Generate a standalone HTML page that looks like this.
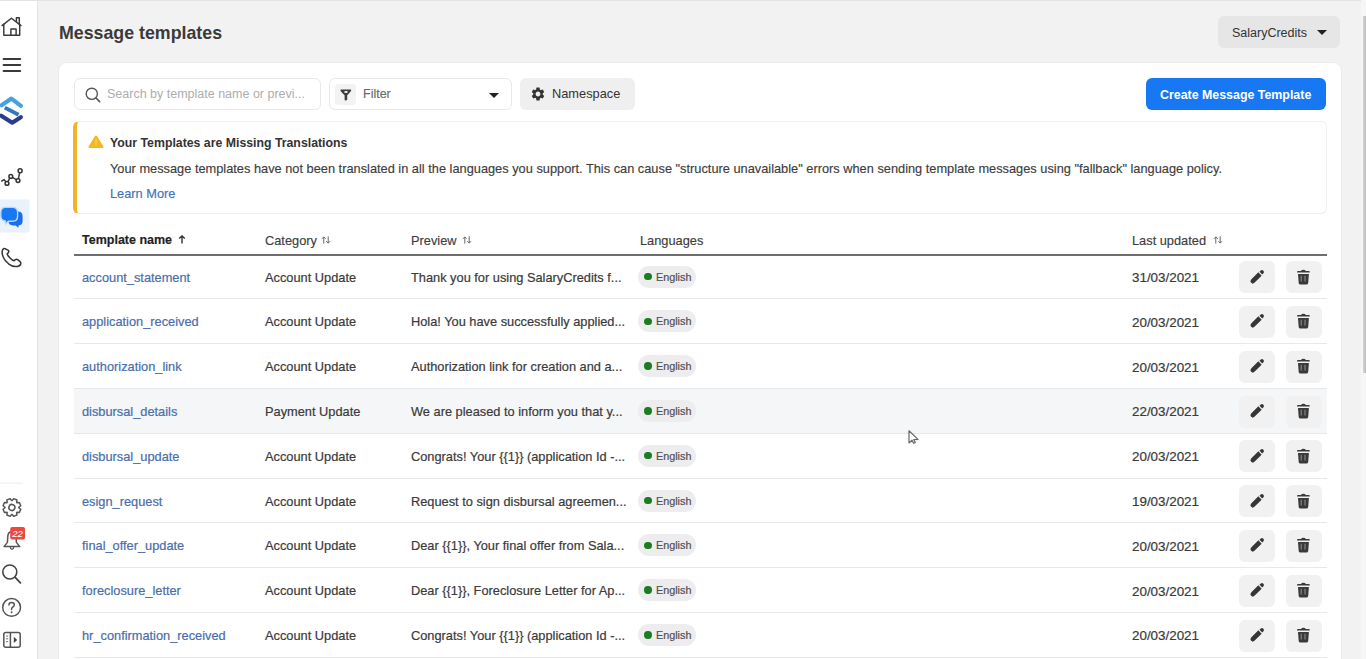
<!DOCTYPE html>
<html><head><meta charset="utf-8">
<style>
*{box-sizing:border-box;margin:0;padding:0}
html,body{width:1366px;height:659px;overflow:hidden;background:#f2f2f2;font-family:"Liberation Sans",sans-serif;color:#333}
#topline{position:absolute;left:0;top:0;width:1366px;height:1px;background:#e2e2e2}
#side{position:absolute;left:0;top:0;width:38px;height:659px;background:#fff;border-right:1px solid #e3e3e3}
#side svg{position:absolute}
#title{position:absolute;left:59px;top:23px;font-size:17.8px;font-weight:bold;color:#3a3a3a;white-space:nowrap;line-height:20px}
#acct{position:absolute;left:1218px;top:16px;width:122px;height:32px;background:#e6e6e6;border-radius:6px}
#acct span{position:absolute;left:14px;top:10px;font-size:12.5px;color:#333;line-height:15px}
.caret{position:absolute;width:0;height:0;border-left:5px solid transparent;border-right:5px solid transparent;border-top:5px solid #222}
#card{position:absolute;left:59px;top:63px;width:1282px;height:620px;background:#fff;border-radius:8px;box-shadow:0 0 0 1px #ebebeb}
#scroll{position:absolute;left:1361px;top:0;width:5px;height:659px;background:#f6f6f6}
#thumb{position:absolute;left:1363px;top:16px;width:3px;height:357px;background:linear-gradient(90deg,#d4d4d4,#bdbdbd)}
#search{position:absolute;left:74px;top:78px;width:247px;height:32px;border:1px solid #e8e8e8;border-radius:6px;background:#fff}
#search span{position:absolute;left:32px;top:8.3px;font-size:12.5px;color:#adadad;line-height:15px;white-space:nowrap}
#filter{position:absolute;left:329px;top:78px;width:183px;height:32px;border:1px solid #e8e8e8;border-radius:6px;background:#fff}
#filter .ic{position:absolute;left:5px;top:5px;width:21px;height:21px;background:#f3f3f3;border-radius:4px}
#filter span{position:absolute;left:33px;top:8px;font-size:12.5px;color:#6a6a6a;-webkit-text-stroke:0.15px currentColor;line-height:15px}
#ns{position:absolute;left:520px;top:78px;width:115px;height:32px;background:#efefef;border-radius:6px}
#ns span{position:absolute;left:32px;top:8px;font-size:12.8px;color:#333;line-height:15px}
#create{position:absolute;left:1146px;top:78px;width:180px;height:32px;background:#1877f2;border-radius:6px}
#create span{position:absolute;left:14px;top:9.5px;font-size:12.4px;font-weight:bold;color:#fff;line-height:15px;white-space:nowrap}
#alert{position:absolute;left:73px;top:121px;width:1254px;height:93px;border:1px solid #efefef;border-left:4px solid #f0b429;border-radius:6px;background:#fff}
#alert .t{position:absolute;left:33px;top:14px;font-size:12.3px;font-weight:bold;color:#333;line-height:15px;white-space:nowrap}
#alert .b{position:absolute;left:33px;top:38.5px;font-size:12.8px;color:#3d3d3d;-webkit-text-stroke:0.15px currentColor;line-height:15px;white-space:nowrap}
#alert .l{position:absolute;left:33px;top:64.3px;font-size:12.8px;color:#4172b8;-webkit-text-stroke:0.15px currentColor;line-height:15px;white-space:nowrap}
#alert svg{position:absolute;left:11px;top:13px}
#thead{position:absolute;left:74px;top:225px;width:1253px;height:31px;border-bottom:2px solid #6e6e6e}
#thead span{position:absolute;top:8px;-webkit-text-stroke:0.15px currentColor;font-size:12.8px;color:#3d3d3d;line-height:15px;white-space:nowrap}
#thead svg{position:absolute}
.row{position:absolute;left:74px;width:1253px;height:44.8px;border-bottom:1px solid #e8e8e8}
.row.hov{background:#f5f6f7}
.row span{position:absolute;top:15px;-webkit-text-stroke:0.2px currentColor;font-size:12.8px;line-height:15px;white-space:nowrap;color:#3a3a3a}
.row .nm{left:8px;color:#4a6eaa}
.row .ct{left:191px}
.row .pv{left:337px}
.row .dt{left:1058px;font-size:13.4px!important;top:15.4px!important}
.pill{position:absolute;left:564px;top:11px;width:58px;height:22px;border-radius:11px;background:#ededef}
.pill i{position:absolute;left:6.2px;top:7.3px;width:7.4px;height:7.4px;border-radius:50%;background:#1a7d22}
.pill span{left:18px!important;top:4px!important;font-size:10.8px!important;color:#505050!important}
.btn{position:absolute;top:6.5px;width:36px;height:32px;border-radius:6px;background:#f1f1f1}
.b1{left:1165px}.b2{left:1212px}
.btn svg{position:absolute;left:10px;top:7.5px}
.b2 svg{left:11px}
#cursor{position:absolute;left:906px;top:428px}
</style></head><body>
<div id="side"><svg style="position:absolute;left:0;top:0" width="37" height="659" viewBox="0 0 37 659">
<g fill="none" stroke="#3a3a3a" stroke-width="1.45" stroke-linejoin="round" stroke-linecap="round">
<path d="M2 25.6 L11.4 18.2 L21 25.6"/>
<path d="M3.8 24.2 V35.3 H19.7 V24.2"/>
<path d="M10.9 35.3 V28.9 H16.1 V35.3"/>
<path d="M16.4 21.6 V17.7 H19.3 V24"/>
<path d="M3.6 58.9 H20.2 M3.6 65 H20.2 M3.6 71.1 H20.2" stroke-width="2"/>
<path d="M1.8 181 L4.2 179.6 L7 183.4 L10.7 176.4 L18 180.6 L20 170.8" stroke-width="1.5"/>
</g>
<g fill="#fff" stroke="#333" stroke-width="1.5">
<circle cx="7" cy="183.4" r="1.9"/><circle cx="10.8" cy="176.4" r="1.9"/><circle cx="18" cy="180.6" r="1.9"/><circle cx="20.1" cy="170.7" r="2"/>
</g>
<!-- logo -->
<path d="M1.6 105.2 L11.4 98.6 L20.9 105.8" fill="none" stroke="#45a2dd" stroke-width="4.2" stroke-linecap="round" stroke-linejoin="round"/>
<path d="M4.8 107.6 L18.6 114.8" fill="none" stroke="#2c7bc0" stroke-width="3.8"/>
<path d="M1.2 115.8 L12.2 122.7 L20.8 117.2" fill="none" stroke="#2b3c8e" stroke-width="4.2" stroke-linecap="round" stroke-linejoin="round"/>
<!-- chat active -->
<rect x="0" y="199.5" width="29.5" height="33" fill="#e9f1fb"/>
<path d="M8.5 216 Q8.5 211.6 13 211.6 L18 211.6 Q22.6 211.6 22.6 216.4 L22.6 220.8 Q22.6 225.4 18.6 225.4 L18.4 227.8 L15.6 225.4 L13 225.4 Q8.5 225.4 8.5 221 Z" fill="#1a6fe8"/>
<path d="M0.8 212.6 Q0.8 207.4 5.6 207.4 L12.6 207.4 Q17.6 207.4 17.6 212.6 L17.6 216 Q17.6 221.2 12.6 221.2 L8.4 221.2 L5.6 223.8 L5.2 221 Q0.8 220.4 0.8 216 Z" fill="#1877f2" stroke="#b9d6fa" stroke-width="1.4"/>
<!-- phone -->
<path d="M5 248.6 Q3.8 248.2 3 249.2 Q1.6 251 2.4 254.6 Q3.6 259.6 8.6 263.8 Q13.2 267.4 17.4 266.4 Q20.6 265.6 20.8 263.6 Q21 262.4 19.8 261.4 L17.6 259.6 Q16.4 258.8 15.4 259.6 L14 260.8 Q12.4 260.4 10 258 Q7.6 255.6 7.2 254 L8.4 252.6 Q9.2 251.6 8.4 250.4 Z" fill="none" stroke="#333" stroke-width="1.5" stroke-linejoin="round"/>
<!-- divider -->
<rect x="0" y="482.6" width="23" height="1" fill="#ececec"/>
<!-- gear -->
<g transform="translate(11.9 507.5) rotate(22.5)" fill="none" stroke="#555" stroke-width="1.5" stroke-linejoin="round">
<path d="M6.46 -2.43 L8.82 -1.79 L8.82 1.79 L6.46 2.43 L6.29 2.85 L7.50 4.97 L4.97 7.50 L2.85 6.29 L2.43 6.46 L1.79 8.82 L-1.79 8.82 L-2.43 6.46 L-2.85 6.29 L-4.97 7.50 L-7.50 4.97 L-6.29 2.85 L-6.46 2.43 L-8.82 1.79 L-8.82 -1.79 L-6.46 -2.43 L-6.29 -2.85 L-7.50 -4.97 L-4.97 -7.50 L-2.85 -6.29 L-2.43 -6.46 L-1.79 -8.82 L1.79 -8.82 L2.43 -6.46 L2.85 -6.29 L4.97 -7.50 L7.50 -4.97 L6.29 -2.85 Z"/>
<circle cx="0" cy="0" r="3"/>
</g>
<!-- bell -->
<path d="M7.8 536.5 Q8 531.6 12 531.4 Q15.8 531.6 16 536.5 L16.4 542.4 L19.8 546.6 L4 546.6 L7.4 542.4 Z" fill="none" stroke="#555" stroke-width="1.5" stroke-linejoin="round"/>
<path d="M10.2 547.2 Q10.6 549.4 12 549.4 Q13.4 549.4 13.8 547.2" fill="none" stroke="#555" stroke-width="1.4"/>
<rect x="10.2" y="527" width="14.8" height="12.4" rx="2" fill="#e94a3f"/>
<text x="17.6" y="536.6" font-family="Liberation Sans" font-size="9.5" font-style="italic" fill="#fff" text-anchor="middle">22</text>
<!-- search -->
<circle cx="9.8" cy="572" r="7" fill="none" stroke="#444" stroke-width="1.6"/>
<path d="M15 577.2 L20.4 582.8" stroke="#444" stroke-width="1.8" stroke-linecap="round"/>
<!-- help -->
<circle cx="11.6" cy="607.4" r="8.9" fill="none" stroke="#555" stroke-width="1.5"/>
<path d="M8.9 605 Q8.9 602.4 11.6 602.4 Q14.3 602.4 14.3 604.8 Q14.3 606.4 12.6 607.2 Q11.6 607.8 11.6 609.4" fill="none" stroke="#555" stroke-width="1.5" stroke-linecap="round"/>
<circle cx="11.6" cy="612.2" r="0.95" fill="#555"/>
<!-- panel -->
<rect x="3.8" y="632.6" width="16.4" height="14.6" rx="2" fill="none" stroke="#555" stroke-width="1.5"/>
<path d="M10.4 632.6 V647.2" stroke="#555" stroke-width="1.5"/>
<path d="M6 636 H8.2 M6 638.8 H8.2 M6 641.6 H8.2" stroke="#777" stroke-width="1"/>
<path d="M13.8 636.8 L17.2 639.9 L13.8 643 Z" fill="#444"/>
</svg>
</div>
<div id="topline"></div>
<div id="title">Message templates</div>
<div id="acct"><span>SalaryCredits</span><div class="caret" style="left:99px;top:14px"></div></div>
<div id="card"></div>
<div id="search"><svg style="position:absolute;left:10px;top:8px" width="16" height="16" viewBox="0 0 16 16"><circle cx="6.8" cy="6.8" r="5.6" fill="none" stroke="#555" stroke-width="1.4"/><path d="M10.8 10.8 L14.6 14.6" stroke="#555" stroke-width="1.6" stroke-linecap="round"/></svg><span>Search by template name or previ...</span></div>
<div id="filter"><div class="ic"><svg style="position:absolute;left:5px;top:4.5px" width="12" height="12" viewBox="0 0 12 12"><path d="M0.4 1 Q0.4 0.4 1 0.4 H10.6 Q11.2 0.4 11.2 1 Q11.2 2.6 7.2 6.2 V10.8 Q6.4 11.8 5.2 11.4 Q4.6 11 4.6 10.2 V6.2 Q0.4 2.6 0.4 1 Z" fill="#3d3d3d"/><ellipse cx="6" cy="3" rx="1.8" ry="1" fill="#f3f3f3"/></svg></div><span>Filter</span><div class="caret" style="left:159px;top:14px"></div></div>
<div id="ns"><svg style="position:absolute;left:10px;top:8px" width="16" height="16" viewBox="0 0 24 24"><path fill="#333" d="M19.14 12.94c.04-.3.06-.61.06-.94 0-.32-.02-.64-.07-.94l2.03-1.58a.49.49 0 0 0 .12-.61l-1.92-3.32a.488.488 0 0 0-.59-.22l-2.39.96c-.5-.38-1.03-.7-1.62-.94l-.36-2.54a.484.484 0 0 0-.48-.41h-3.84c-.24 0-.43.17-.47.41l-.36 2.54c-.59.24-1.13.57-1.62.94l-2.39-.96c-.22-.08-.47 0-.59.22L2.74 8.87c-.12.21-.08.47.12.61l2.03 1.58c-.05.3-.09.63-.09.94s.02.64.07.94l-2.03 1.58a.49.49 0 0 0-.12.61l1.920 3.32c.12.22.37.29.59.22l2.39-.96c.5.38 1.03.7 1.62.94l.36 2.54c.05.24.24.41.48.41h3.84c.24 0 .44-.17.47-.41l.36-2.54c.59-.24 1.13-.56 1.62-.94l2.39.96c.22.08.47 0 .59-.22l1.92-3.32c.12-.22.07-.47-.12-.61l-2.010-1.58zM12 15.6c-1.98 0-3.6-1.62-3.6-3.6s1.62-3.6 3.6-3.6 3.6 1.62 3.6 3.6-1.62 3.6-3.6 3.6z"/></svg><span>Namespace</span></div>
<div id="create"><span>Create Message Template</span></div>
<div id="alert"><svg width="16" height="14" viewBox="0 0 16 14"><path d="M8 0.4 Q8.6 0.4 9 1 L15.4 11.6 Q15.8 12.8 14.6 13 L1.4 13 Q0.2 12.8 0.6 11.6 L7 1 Q7.4 0.4 8 0.4 Z" fill="#f2b822"/><path d="M8 4.6 V9.4" stroke="#f8cf4a" stroke-width="1.6" stroke-linecap="round"/></svg><div class="t">Your Templates are Missing Translations</div><div class="b">Your message templates have not been translated in all the languages you support. This can cause "structure unavailable" errors when sending template messages using "fallback" language policy.</div><div class="l">Learn More</div></div>
<div id="thead"><span style="left:8px;font-weight:bold;color:#222;font-size:12.5px">Template name</span><svg style="left:104px;top:10px" width="8" height="9" viewBox="0 0 8 9"><path d="M4 1 V8.5 M1.2 3.6 L4 0.9 L6.8 3.6" fill="none" stroke="#333" stroke-width="1.4"/></svg><span style="left:191px">Category</span><svg style="left:247px;top:11px" width="10" height="8" viewBox="0 0 10 8"><path d="M2.8 7.6 V0.9 M0.9 2.8 L2.8 0.9 L4.7 2.8 M7.2 0.4 V7.1 M5.3 5.2 L7.2 7.1 L9.1 5.2" fill="none" stroke="#666" stroke-width="1"/></svg><span style="left:337px">Preview</span><svg style="left:388px;top:11px" width="10" height="8" viewBox="0 0 10 8"><path d="M2.8 7.6 V0.9 M0.9 2.8 L2.8 0.9 L4.7 2.8 M7.2 0.4 V7.1 M5.3 5.2 L7.2 7.1 L9.1 5.2" fill="none" stroke="#666" stroke-width="1"/></svg><span style="left:566px">Languages</span><span style="left:1058px">Last updated</span><svg style="left:1139px;top:11px" width="10" height="8" viewBox="0 0 10 8"><path d="M2.8 7.6 V0.9 M0.9 2.8 L2.8 0.9 L4.7 2.8 M7.2 0.4 V7.1 M5.3 5.2 L7.2 7.1 L9.1 5.2" fill="none" stroke="#666" stroke-width="1"/></svg></div>
<div class="row" style="top:254.6px"><span class="nm">account_statement</span><span class="ct">Account Update</span><span class="pv">Thank you for using SalaryCredits f...</span><div class="pill"><i></i><span>English</span></div><span class="dt">31/03/2021</span><div class="btn b1"><svg width="17" height="17" viewBox="0 0 17 17"><g transform="translate(0.8 -0.6)"><path d="M8.57 3.97 L11.83 7.23 L4.63 14.43 A2.3 2.3 0 0 1 1.37 11.17 Z" fill="#363636"/><path d="M9.71 3.41 L12.39 6.09 L13.66 4.82 A1.9 1.9 0 0 0 10.98 2.14 Z" fill="#363636"/></g></svg></div><div class="btn b2"><svg width="14" height="16" viewBox="0 0 14 16"><path d="M4 1.9 Q4.6 0.7 6.4 0.7 Q8.2 0.7 8.8 1.9 L11.8 2 Q12.8 2.1 12.8 3 L12.8 3.5 L0 3.5 L0 3 Q0 2.1 1 2 Z" fill="#3a3a3a"/><path d="M1 4.9 L11.9 4.9 L11.2 14 Q11 15.6 9.4 15.6 L3.5 15.6 Q1.9 15.6 1.7 14 Z" fill="#3a3a3a"/><path d="M4.2 6.8 V12.6 M8 6.8 V12.6" stroke="#8a8a8a" stroke-width="1.1"/></svg></div></div>
<div class="row" style="top:299.4px"><span class="nm">application_received</span><span class="ct">Account Update</span><span class="pv">Hola! You have successfully applied...</span><div class="pill"><i></i><span>English</span></div><span class="dt">20/03/2021</span><div class="btn b1"><svg width="17" height="17" viewBox="0 0 17 17"><g transform="translate(0.8 -0.6)"><path d="M8.57 3.97 L11.83 7.23 L4.63 14.43 A2.3 2.3 0 0 1 1.37 11.17 Z" fill="#363636"/><path d="M9.71 3.41 L12.39 6.09 L13.66 4.82 A1.9 1.9 0 0 0 10.98 2.14 Z" fill="#363636"/></g></svg></div><div class="btn b2"><svg width="14" height="16" viewBox="0 0 14 16"><path d="M4 1.9 Q4.6 0.7 6.4 0.7 Q8.2 0.7 8.8 1.9 L11.8 2 Q12.8 2.1 12.8 3 L12.8 3.5 L0 3.5 L0 3 Q0 2.1 1 2 Z" fill="#3a3a3a"/><path d="M1 4.9 L11.9 4.9 L11.2 14 Q11 15.6 9.4 15.6 L3.5 15.6 Q1.9 15.6 1.7 14 Z" fill="#3a3a3a"/><path d="M4.2 6.8 V12.6 M8 6.8 V12.6" stroke="#8a8a8a" stroke-width="1.1"/></svg></div></div>
<div class="row" style="top:344.2px"><span class="nm">authorization_link</span><span class="ct">Account Update</span><span class="pv">Authorization link for creation and a...</span><div class="pill"><i></i><span>English</span></div><span class="dt">20/03/2021</span><div class="btn b1"><svg width="17" height="17" viewBox="0 0 17 17"><g transform="translate(0.8 -0.6)"><path d="M8.57 3.97 L11.83 7.23 L4.63 14.43 A2.3 2.3 0 0 1 1.37 11.17 Z" fill="#363636"/><path d="M9.71 3.41 L12.39 6.09 L13.66 4.82 A1.9 1.9 0 0 0 10.98 2.14 Z" fill="#363636"/></g></svg></div><div class="btn b2"><svg width="14" height="16" viewBox="0 0 14 16"><path d="M4 1.9 Q4.6 0.7 6.4 0.7 Q8.2 0.7 8.8 1.9 L11.8 2 Q12.8 2.1 12.8 3 L12.8 3.5 L0 3.5 L0 3 Q0 2.1 1 2 Z" fill="#3a3a3a"/><path d="M1 4.9 L11.9 4.9 L11.2 14 Q11 15.6 9.4 15.6 L3.5 15.6 Q1.9 15.6 1.7 14 Z" fill="#3a3a3a"/><path d="M4.2 6.8 V12.6 M8 6.8 V12.6" stroke="#8a8a8a" stroke-width="1.1"/></svg></div></div>
<div class="row hov" style="top:389.0px"><span class="nm">disbursal_details</span><span class="ct">Payment Update</span><span class="pv">We are pleased to inform you that y...</span><div class="pill"><i></i><span>English</span></div><span class="dt">22/03/2021</span><div class="btn b1"><svg width="17" height="17" viewBox="0 0 17 17"><g transform="translate(0.8 -0.6)"><path d="M8.57 3.97 L11.83 7.23 L4.63 14.43 A2.3 2.3 0 0 1 1.37 11.17 Z" fill="#363636"/><path d="M9.71 3.41 L12.39 6.09 L13.66 4.82 A1.9 1.9 0 0 0 10.98 2.14 Z" fill="#363636"/></g></svg></div><div class="btn b2"><svg width="14" height="16" viewBox="0 0 14 16"><path d="M4 1.9 Q4.6 0.7 6.4 0.7 Q8.2 0.7 8.8 1.9 L11.8 2 Q12.8 2.1 12.8 3 L12.8 3.5 L0 3.5 L0 3 Q0 2.1 1 2 Z" fill="#3a3a3a"/><path d="M1 4.9 L11.9 4.9 L11.2 14 Q11 15.6 9.4 15.6 L3.5 15.6 Q1.9 15.6 1.7 14 Z" fill="#3a3a3a"/><path d="M4.2 6.8 V12.6 M8 6.8 V12.6" stroke="#8a8a8a" stroke-width="1.1"/></svg></div></div>
<div class="row" style="top:433.8px"><span class="nm">disbursal_update</span><span class="ct">Account Update</span><span class="pv">Congrats! Your {{1}} (application Id -...</span><div class="pill"><i></i><span>English</span></div><span class="dt">20/03/2021</span><div class="btn b1"><svg width="17" height="17" viewBox="0 0 17 17"><g transform="translate(0.8 -0.6)"><path d="M8.57 3.97 L11.83 7.23 L4.63 14.43 A2.3 2.3 0 0 1 1.37 11.17 Z" fill="#363636"/><path d="M9.71 3.41 L12.39 6.09 L13.66 4.82 A1.9 1.9 0 0 0 10.98 2.14 Z" fill="#363636"/></g></svg></div><div class="btn b2"><svg width="14" height="16" viewBox="0 0 14 16"><path d="M4 1.9 Q4.6 0.7 6.4 0.7 Q8.2 0.7 8.8 1.9 L11.8 2 Q12.8 2.1 12.8 3 L12.8 3.5 L0 3.5 L0 3 Q0 2.1 1 2 Z" fill="#3a3a3a"/><path d="M1 4.9 L11.9 4.9 L11.2 14 Q11 15.6 9.4 15.6 L3.5 15.6 Q1.9 15.6 1.7 14 Z" fill="#3a3a3a"/><path d="M4.2 6.8 V12.6 M8 6.8 V12.6" stroke="#8a8a8a" stroke-width="1.1"/></svg></div></div>
<div class="row" style="top:478.6px"><span class="nm">esign_request</span><span class="ct">Account Update</span><span class="pv">Request to sign disbursal agreemen...</span><div class="pill"><i></i><span>English</span></div><span class="dt">19/03/2021</span><div class="btn b1"><svg width="17" height="17" viewBox="0 0 17 17"><g transform="translate(0.8 -0.6)"><path d="M8.57 3.97 L11.83 7.23 L4.63 14.43 A2.3 2.3 0 0 1 1.37 11.17 Z" fill="#363636"/><path d="M9.71 3.41 L12.39 6.09 L13.66 4.82 A1.9 1.9 0 0 0 10.98 2.14 Z" fill="#363636"/></g></svg></div><div class="btn b2"><svg width="14" height="16" viewBox="0 0 14 16"><path d="M4 1.9 Q4.6 0.7 6.4 0.7 Q8.2 0.7 8.8 1.9 L11.8 2 Q12.8 2.1 12.8 3 L12.8 3.5 L0 3.5 L0 3 Q0 2.1 1 2 Z" fill="#3a3a3a"/><path d="M1 4.9 L11.9 4.9 L11.2 14 Q11 15.6 9.4 15.6 L3.5 15.6 Q1.9 15.6 1.7 14 Z" fill="#3a3a3a"/><path d="M4.2 6.8 V12.6 M8 6.8 V12.6" stroke="#8a8a8a" stroke-width="1.1"/></svg></div></div>
<div class="row" style="top:523.4px"><span class="nm">final_offer_update</span><span class="ct">Account Update</span><span class="pv">Dear {{1}}, Your final offer from Sala...</span><div class="pill"><i></i><span>English</span></div><span class="dt">20/03/2021</span><div class="btn b1"><svg width="17" height="17" viewBox="0 0 17 17"><g transform="translate(0.8 -0.6)"><path d="M8.57 3.97 L11.83 7.23 L4.63 14.43 A2.3 2.3 0 0 1 1.37 11.17 Z" fill="#363636"/><path d="M9.71 3.41 L12.39 6.09 L13.66 4.82 A1.9 1.9 0 0 0 10.98 2.14 Z" fill="#363636"/></g></svg></div><div class="btn b2"><svg width="14" height="16" viewBox="0 0 14 16"><path d="M4 1.9 Q4.6 0.7 6.4 0.7 Q8.2 0.7 8.8 1.9 L11.8 2 Q12.8 2.1 12.8 3 L12.8 3.5 L0 3.5 L0 3 Q0 2.1 1 2 Z" fill="#3a3a3a"/><path d="M1 4.9 L11.9 4.9 L11.2 14 Q11 15.6 9.4 15.6 L3.5 15.6 Q1.9 15.6 1.7 14 Z" fill="#3a3a3a"/><path d="M4.2 6.8 V12.6 M8 6.8 V12.6" stroke="#8a8a8a" stroke-width="1.1"/></svg></div></div>
<div class="row" style="top:568.2px"><span class="nm">foreclosure_letter</span><span class="ct">Account Update</span><span class="pv">Dear {{1}}, Foreclosure Letter for Ap...</span><div class="pill"><i></i><span>English</span></div><span class="dt">20/03/2021</span><div class="btn b1"><svg width="17" height="17" viewBox="0 0 17 17"><g transform="translate(0.8 -0.6)"><path d="M8.57 3.97 L11.83 7.23 L4.63 14.43 A2.3 2.3 0 0 1 1.37 11.17 Z" fill="#363636"/><path d="M9.71 3.41 L12.39 6.09 L13.66 4.82 A1.9 1.9 0 0 0 10.98 2.14 Z" fill="#363636"/></g></svg></div><div class="btn b2"><svg width="14" height="16" viewBox="0 0 14 16"><path d="M4 1.9 Q4.6 0.7 6.4 0.7 Q8.2 0.7 8.8 1.9 L11.8 2 Q12.8 2.1 12.8 3 L12.8 3.5 L0 3.5 L0 3 Q0 2.1 1 2 Z" fill="#3a3a3a"/><path d="M1 4.9 L11.9 4.9 L11.2 14 Q11 15.6 9.4 15.6 L3.5 15.6 Q1.9 15.6 1.7 14 Z" fill="#3a3a3a"/><path d="M4.2 6.8 V12.6 M8 6.8 V12.6" stroke="#8a8a8a" stroke-width="1.1"/></svg></div></div>
<div class="row" style="top:613.0px"><span class="nm">hr_confirmation_received</span><span class="ct">Account Update</span><span class="pv">Congrats! Your {{1}} (application Id -...</span><div class="pill"><i></i><span>English</span></div><span class="dt">20/03/2021</span><div class="btn b1"><svg width="17" height="17" viewBox="0 0 17 17"><g transform="translate(0.8 -0.6)"><path d="M8.57 3.97 L11.83 7.23 L4.63 14.43 A2.3 2.3 0 0 1 1.37 11.17 Z" fill="#363636"/><path d="M9.71 3.41 L12.39 6.09 L13.66 4.82 A1.9 1.9 0 0 0 10.98 2.14 Z" fill="#363636"/></g></svg></div><div class="btn b2"><svg width="14" height="16" viewBox="0 0 14 16"><path d="M4 1.9 Q4.6 0.7 6.4 0.7 Q8.2 0.7 8.8 1.9 L11.8 2 Q12.8 2.1 12.8 3 L12.8 3.5 L0 3.5 L0 3 Q0 2.1 1 2 Z" fill="#3a3a3a"/><path d="M1 4.9 L11.9 4.9 L11.2 14 Q11 15.6 9.4 15.6 L3.5 15.6 Q1.9 15.6 1.7 14 Z" fill="#3a3a3a"/><path d="M4.2 6.8 V12.6 M8 6.8 V12.6" stroke="#8a8a8a" stroke-width="1.1"/></svg></div></div>
<div id="scroll"></div><div id="thumb"></div>
<svg id="cursor" width="14" height="18" viewBox="0 0 14 18"><path d="M3 2.8 L3 15 L6 12.2 L7.6 15.2 L9.2 14.6 L7.8 11.6 L12 11.4 Z" fill="#fff" stroke="#666" stroke-width="1.2" stroke-linejoin="round"/></svg>
</body></html>
